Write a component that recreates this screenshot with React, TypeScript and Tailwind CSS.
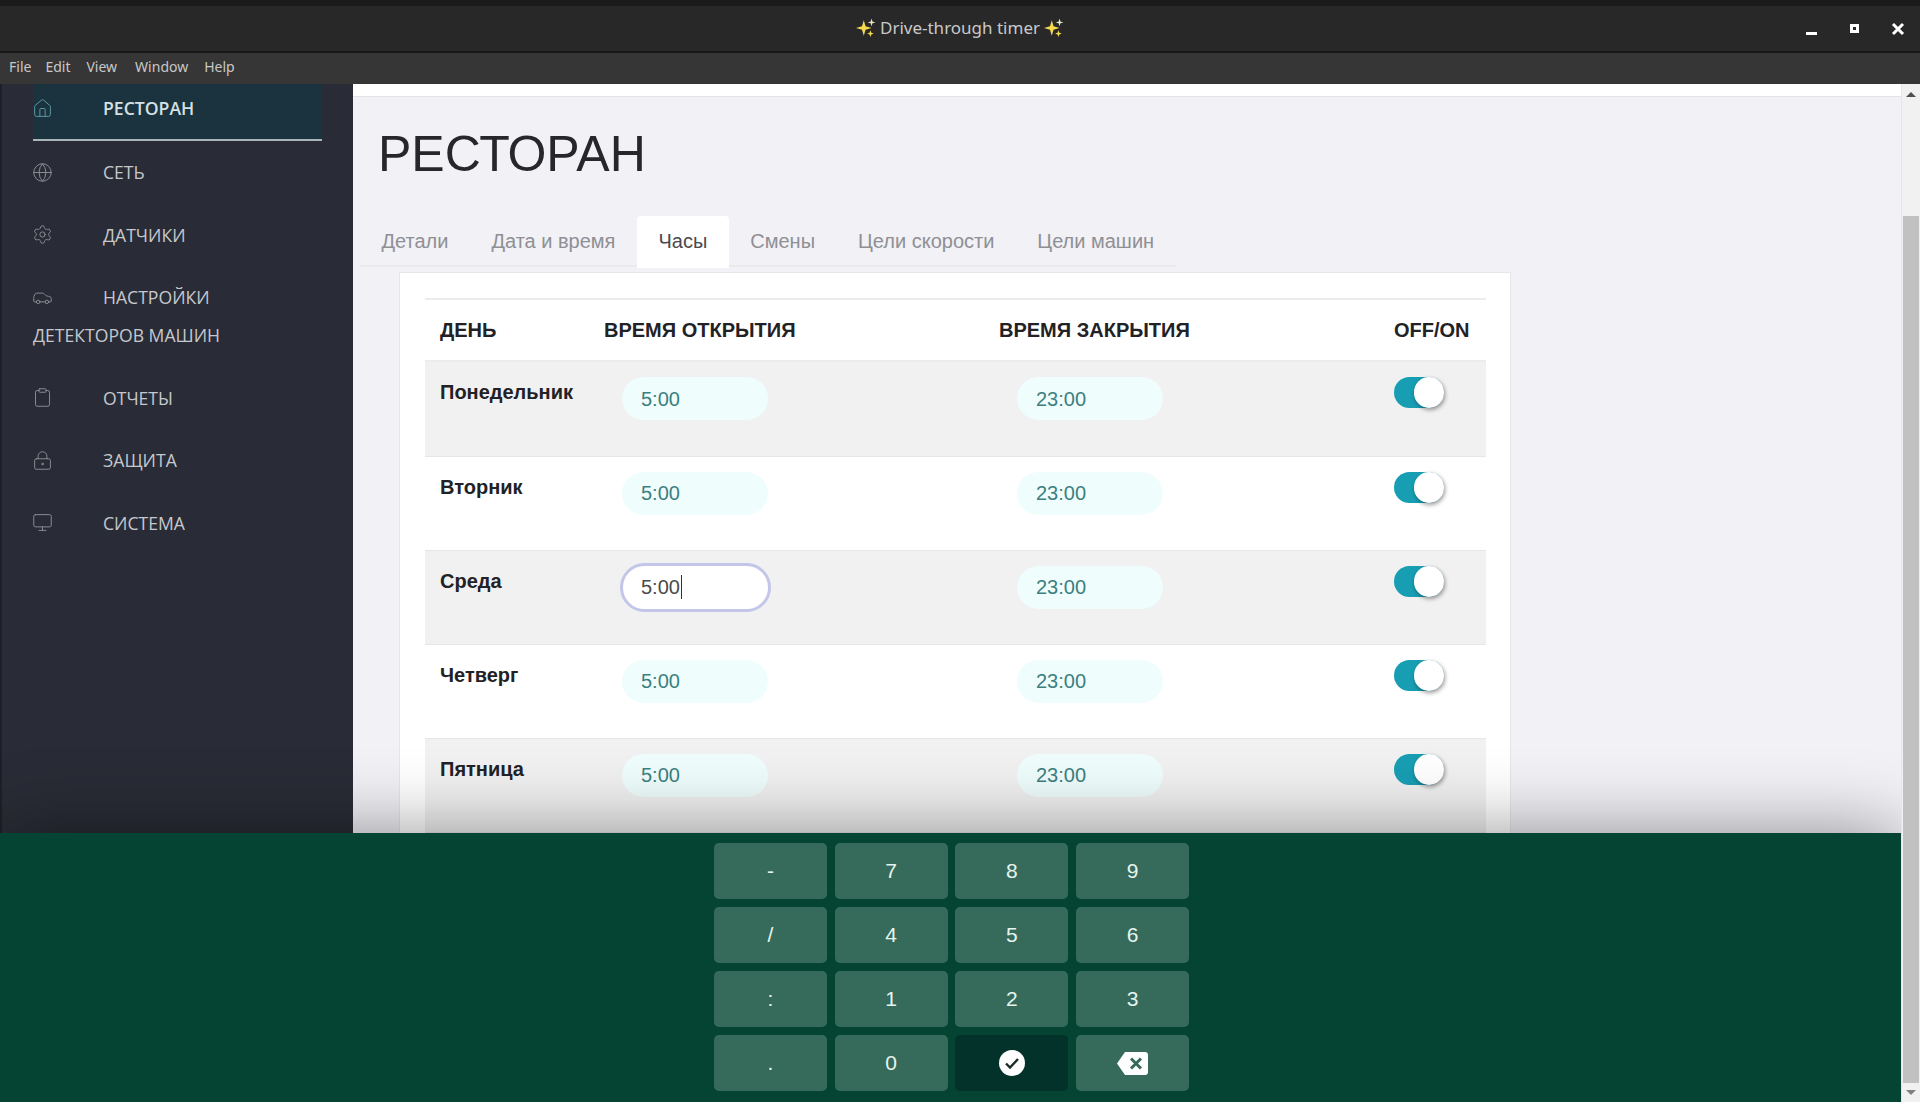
import React from 'react';
import { Car, Clipboard, Globe, Home, LockKeyhole, Monitor, Settings } from 'lucide-react';

const menuItems = [
  { label: 'РЕСТОРАН', icon: Home, active: true },
  { label: 'СЕТЬ', icon: Globe },
  { label: 'ДАТЧИКИ', icon: Settings },
  { label: 'НАСТРОЙКИ', extra: 'ДЕТЕКТОРОВ МАШИН', icon: Car },
  { label: 'ОТЧЕТЫ', icon: Clipboard },
  { label: 'ЗАЩИТА', icon: LockKeyhole },
  { label: 'СИСТЕМА', icon: Monitor },
];

const tabs = ['Детали', 'Дата и время', 'Часы', 'Смены', 'Цели скорости', 'Цели машин'];
const days = ['Понедельник', 'Вторник', 'Среда', 'Четверг', 'Пятница'];
const keys = ['-', '7', '8', '9', '/', '4', '5', '6', ':', '1', '2', '3', '.', '0'];

const Sparkles: React.FC = () => (
  <svg width="20" height="20" viewBox="0 0 18 18" className="shrink-0">
    <path d="M7 2 L8.6 7.4 L14 9 L8.6 10.6 L7 16 L5.4 10.6 L0 9 L5.4 7.4 Z" fill="#f5d94e" />
    <path d="M14 0.5 L14.8 3.2 L17.5 4 L14.8 4.8 L14 7.5 L13.2 4.8 L10.5 4 L13.2 3.2 Z" fill="#e8e3c0" />
    <path d="M13 11 L13.8 13.2 L16 14 L13.8 14.8 L13 17 L12.2 14.8 L10 14 L12.2 13.2 Z" fill="#f5d94e" />
  </svg>
);

const TimeInput: React.FC<{ value: string; focused?: boolean }> = ({ value, focused }) => {
  if (focused) {
    return (
      <div className="flex h-[49px] w-[151px] -translate-x-[2px] -translate-y-[3px] items-center rounded-full border-[3px] border-[#c3c6e8] bg-white pl-[18px] text-[20px] text-[#4a4a4a]">
        {value}
        <span className="ml-px h-[24px] w-px bg-[#333]" />
      </div>
    );
  }
  return (
    <div className="flex h-[43px] w-[146px] items-center rounded-full bg-[#f0fdfd] pl-[19px] text-[20px] text-[#3b7f80]">
      {value}
    </div>
  );
};

const Toggle: React.FC = () => (
  <div className="relative h-[31px] w-[50px] rounded-full bg-[#189eb3]">
    <div className="absolute right-0 top-0 h-[31px] w-[30px] rounded-full bg-white shadow-[1px_2px_4px_rgba(0,0,0,0.4)]" />
  </div>
);

export default function App() {
  return (
    <div className="flex h-[1102px] w-[1920px] flex-col overflow-hidden bg-[#1b1b1b] font-['Liberation_Sans',sans-serif]">
      <div className="mt-[6px] flex h-[47px] shrink-0 items-center justify-between border-b-2 border-[#171717] bg-[#282828]">
        <div className="w-[200px]" />
        <div className="flex items-center gap-[4px] pb-px font-['Noto_Sans',sans-serif] text-[17px] text-[#c9c9c9]">
          <Sparkles />
          <span>Drive-through timer</span>
          <Sparkles />
        </div>
        <div className="flex w-[200px] items-center justify-end pr-[15px]">
          <div className="mt-[9px] h-[3px] w-[11px] bg-white" />
          <div className="ml-[33px] flex h-[9px] w-[9px] items-center justify-center bg-white">
            <div className="h-[3px] w-[3px] bg-[#282828]" />
          </div>
          <svg width="14" height="14" viewBox="0 0 14 14" className="ml-[32px]">
            <path d="M2 2 L12 12 M12 2 L2 12" stroke="white" strokeWidth="3" />
          </svg>
        </div>
      </div>
      <div className="flex h-[31px] shrink-0 items-center gap-[16px] bg-[#363636] pb-[4px] pl-[9px] font-['Noto_Sans',sans-serif] text-[14px] text-[#c8c8c8]">
        <span className="-mr-[2px]">File</span>
        <span>Edit</span>
        <span className="mr-[2px]">View</span>
        <span>Window</span>
        <span>Help</span>
      </div>
      <div className="flex min-h-0 flex-1">
        <div className="flex min-w-0 flex-1 flex-col">
          <div className="flex min-h-0 flex-1">
            <aside className="w-[353px] shrink-0 border-l-2 border-[#1f1f27] bg-[#292c36] font-['Open_Sans',sans-serif] text-[17.6px] text-[#c6c8cd]">
              {menuItems.map((item) => {
                const Icon = item.icon;
                return (
                  <div
                    key={item.label}
                    className={
                      item.active
                        ? 'ml-[31px] mr-[31px] h-[57px] border-b-2 border-[#a9b4b8] bg-[#1a333e] pt-[5px] font-semibold leading-[38px] text-[#d6e0e4]'
                        : 'mb-[0.5px] ml-[31px] mr-[31px] py-3 leading-[38px]'
                    }
                  >
                    <span className="inline-block w-[70px] -translate-y-[2px] align-middle">
                      <Icon
                        size={21}
                        strokeWidth={1.1}
                        className={item.active ? '-ml-px text-[#5f9aa3]' : '-ml-px text-[#8b8e96]'}
                      />
                    </span>
                    {item.label}
                    {item.extra && <br />}
                    {item.extra}
                  </div>
                );
              })}
            </aside>
            <main className="min-w-0 flex-1 overflow-hidden bg-[#f1f1f6]">
              <div className="h-[13px] border-b border-[#e4e4e8] bg-white" />
              <h1 className="mt-[26px] pl-[25px] text-[50px] leading-[62px] text-[#26262b]">РЕСТОРАН</h1>
              <div className="ml-[7px] mt-[31px] flex h-[51px] w-[816px] border-b-2 border-[#e9e9ee]">
                {tabs.map((tab) => (
                  <div
                    key={tab}
                    className={
                      tab === 'Часы'
                        ? 'h-[52px] whitespace-nowrap rounded-t bg-white px-[21.5px] pt-[10px] text-[20px] text-[#4a4a4f]'
                        : 'whitespace-nowrap px-[21.5px] pt-[10px] text-[20px] text-[#8f8f94]'
                    }
                  >
                    {tab}
                  </div>
                ))}
              </div>
              <div className="ml-[46px] mt-[5px] w-[1112px] border border-[#e6e6ea] bg-white pl-[25px] pt-[25px]">
                <table className="w-[1061px] table-fixed border-collapse text-[#222226]">
                  <colgroup>
                    <col className="w-[164px]" />
                    <col className="w-[395px]" />
                    <col className="w-[395px]" />
                    <col className="w-[107px]" />
                  </colgroup>
                  <thead>
                    <tr className="h-[62px] border-y-2 border-[#ececec] text-left text-[20px] font-bold">
                      <th className="pl-[15px]">ДЕНЬ</th>
                      <th className="pl-[15px]">ВРЕМЯ ОТКРЫТИЯ</th>
                      <th className="pl-[15px]">ВРЕМЯ ЗАКРЫТИЯ</th>
                      <th className="pl-[15px]">OFF/ON</th>
                    </tr>
                  </thead>
                  <tbody>
                    {days.map((day, i) => (
                      <tr
                        key={day}
                        className={
                          i === 0
                            ? 'h-[95px] border-b border-[#e6e6e6] bg-[#f1f1f1]'
                            : i % 2 === 0
                              ? 'h-[94px] border-b border-[#e6e6e6] bg-[#f1f1f1]'
                              : 'h-[94px] border-b border-[#e6e6e6]'
                        }
                      >
                        <td className="pl-[15px] pt-[18px] align-top text-[20px] font-bold leading-[24px]">{day}</td>
                        <td className="pl-[33px] pt-[15px] align-top">
                          <TimeInput value="5:00" focused={day === 'Среда'} />
                        </td>
                        <td className="pl-[33px] pt-[15px] align-top">
                          <TimeInput value="23:00" />
                        </td>
                        <td className="pl-[15px] pt-[15px] align-top">
                          <Toggle />
                        </td>
                      </tr>
                    ))}
                  </tbody>
                </table>
              </div>
            </main>
          </div>
          <div className="relative h-[269px] shrink-0 bg-[#054333] pl-[2px] pt-[10px] shadow-[0_0_70px_rgba(0,0,0,0.42)]">
            <div className="mx-auto grid w-[475px] grid-cols-4 gap-x-[7.67px] gap-y-2">
              {keys.map((key) => (
                <button key={key} className="flex h-[56px] items-center justify-center rounded-[5px] bg-[#366b5c] text-[21px] text-[#e6f4ee]">
                  {key}
                </button>
              ))}
              <button className="flex h-[56px] items-center justify-center rounded-[5px] bg-[#03322a]">
                <svg width="26" height="26" viewBox="0 0 26 26">
                  <circle cx="13" cy="13" r="13" fill="white" />
                  <path d="M7 13.5 L11 17.5 L19 9" fill="none" stroke="#1c2b28" strokeWidth="2.4" />
                </svg>
              </button>
              <button className="flex h-[56px] items-center justify-center rounded-[5px] bg-[#366b5c]">
                <svg width="31" height="23" viewBox="0 0 31 23">
                  <path d="M8 0 H28 a3 3 0 0 1 3 3 V20 a3 3 0 0 1 -3 3 H8 L0 11.5 Z" fill="white" />
                  <path d="M14 6.5 L24 16.5 M24 6.5 L14 16.5" stroke="#366b5c" strokeWidth="3" />
                </svg>
              </button>
            </div>
          </div>
        </div>
        <div className="relative z-10 flex w-[19px] shrink-0 flex-col items-center border-l border-[#dfe9e6] bg-[#f1f1f1]">
          <div className="flex h-[16px] w-full items-center justify-center pt-[4px]">
            <div className="h-0 w-0 border-x-[5px] border-b-[5px] border-x-transparent border-b-[#505050]" />
          </div>
          <div className="mt-[116px] w-[16px] flex-1 bg-[#c1c1c1]" />
          <div className="flex h-[19px] w-full items-center justify-center">
            <div className="h-0 w-0 border-x-[5px] border-t-[5px] border-x-transparent border-t-[#808080]" />
          </div>
        </div>
      </div>
    </div>
  );
}
